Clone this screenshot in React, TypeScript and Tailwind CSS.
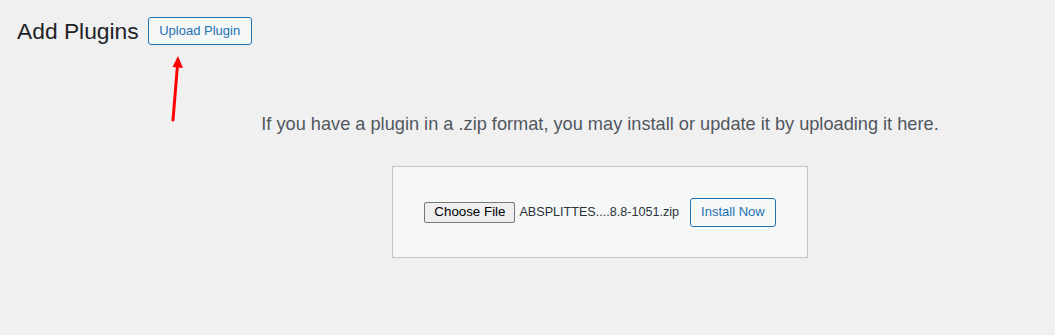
import React from 'react';

const font = { fontFamily: '"Liberation Sans", Arial, sans-serif' };

const RedArrow = () => (
  <svg width="20" height="70" viewBox="0 0 20 70" className="block">
    <line x1="7" y1="67" x2="11.5" y2="12" stroke="#ff0000" strokeWidth="3" strokeLinecap="round" />
    <polygon points="12,3 17,15 6.5,14" fill="#ff0000" />
  </svg>
);

export default function App() {
  return (
    <div className="w-[1055px] h-[335px] bg-[#f0f0f1] text-[#1d2327] overflow-hidden" style={font}>
      <div className="flex items-center gap-[9px] pl-[17px] pt-[17px]">
        <h1 className="text-[22.8px] leading-[28px] font-normal">Add Plugins</h1>
        <button className="h-[28px] px-[10.5px] rounded-[3px] border border-[#2271b1] bg-[#f6f7f7] text-[#2271b1] text-[13px]">
          Upload Plugin
        </button>
      </div>

      <div className="pl-[166px] mt-[8px]">
        <RedArrow />
      </div>

      <div className="pl-[145px] -mt-[11px] flex flex-col items-center">
        <p className="text-[18.2px] leading-[24px] text-[#50575e]">
          If you have a plugin in a .zip format, you may install or update it by uploading it here.
        </p>
        <div className="mt-[30px] w-[416px] h-[92px] border border-[#c3c4c7] bg-[#f6f7f7] flex items-center justify-center">
          <div className="flex items-center">
            <span className="h-[21px] px-[9px] flex items-center rounded-[2px] border border-[#767676] bg-[#efefef] text-black text-[13.33px]">
              Choose File
            </span>
            <span className="ml-[4px] text-[12.6px] text-[#2c3338]">ABSPLITTES....8.8-1051.zip</span>
            <button className="ml-[11px] h-[29px] px-[10px] rounded-[3px] border border-[#2271b1] bg-[#f6f7f7] text-[#2271b1] text-[13px]">
              Install Now
            </button>
          </div>
        </div>
      </div>
    </div>
  );
}
